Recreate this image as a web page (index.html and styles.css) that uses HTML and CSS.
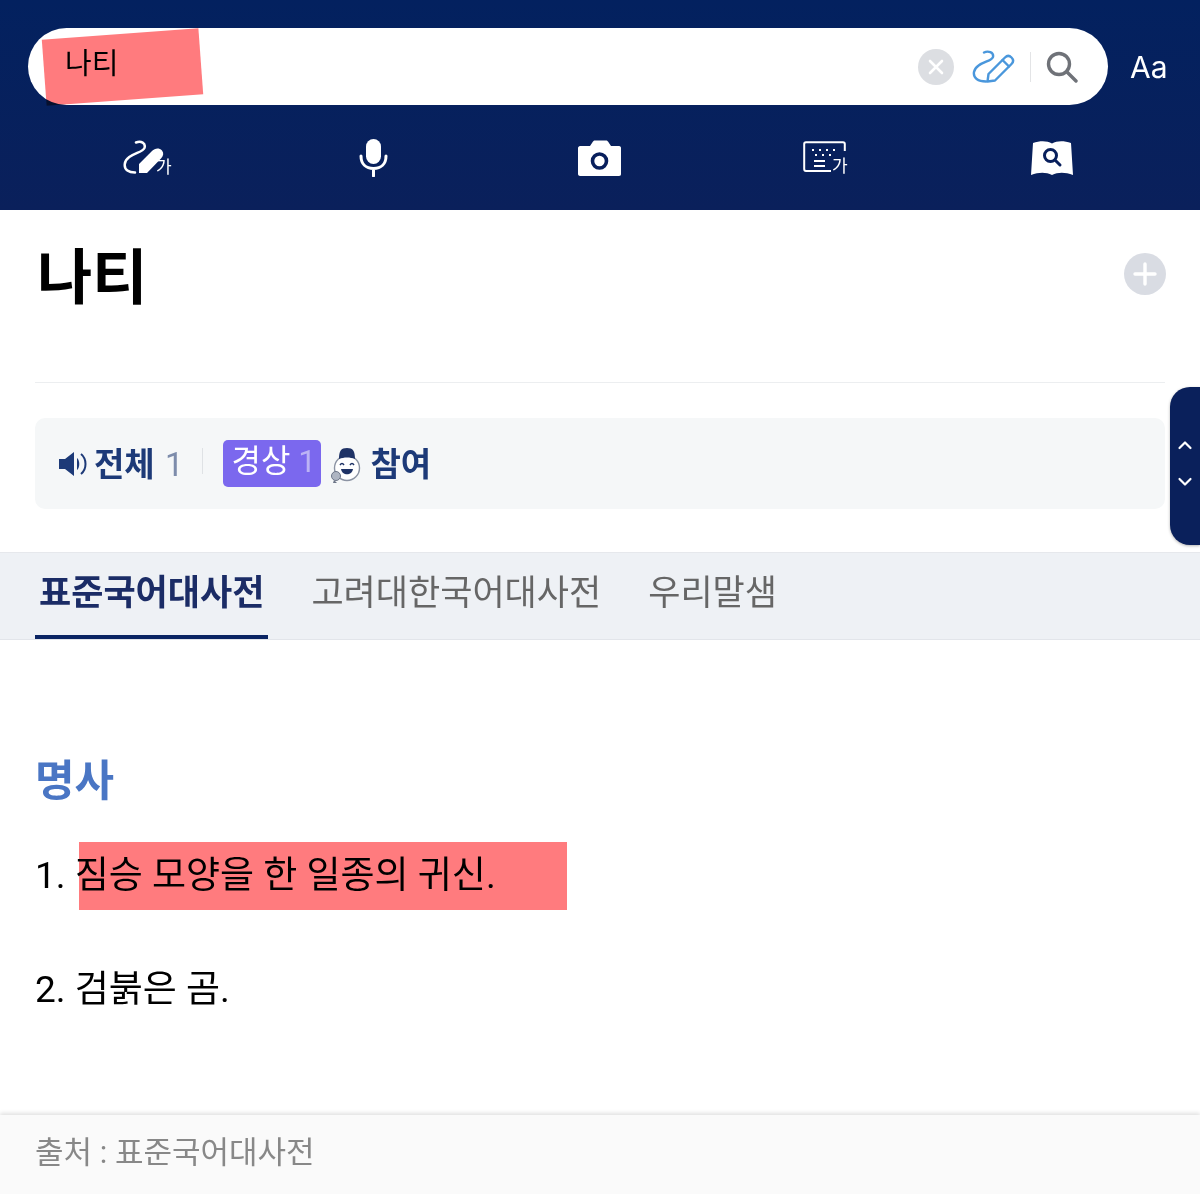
FILE: index.html
```html
<!DOCTYPE html>
<html lang="ko">
<head>
    <meta charset="UTF-8">
    <meta name="viewport" content="width=device-width, initial-scale=1.0">
    <title>나티</title>
    <link rel="stylesheet" href="styles.css">
</head>
<body>
    <header class="top">
        <div class="search_row">
            <div class="search_box">
                <span class="search_word">나티</span>
                <div class="search_tools">
                    <span class="clear_btn">
                        <svg width="20" height="20" viewBox="0 0 20 20"><path d="M4 4 16 16M16 4 4 16" stroke="#fff" stroke-width="2.6" stroke-linecap="round"/></svg>
                    </span>
                    <svg class="pen_btn" width="44" height="36" viewBox="0 0 44 36" fill="none" stroke="#4a97dc" stroke-width="2.4" stroke-linecap="round" stroke-linejoin="round">
                        <path d="M12 3.500C16 1.500 22 3 21 8C20 13 4 13 2 23C1 29 6 32.500 14 32.500"/>
                        <path d="M15.500 32.500 16.500 25 33 8.500C35 6.500 37.500 6.500 39.500 8.500C41.500 10.500 41.500 13 39.500 15L23 31.500Z"/>
                        <path d="M30.500 11 37 17.500"/>
                    </svg>
                    <span class="tool_line"></span>
                    <svg class="find_btn" width="32" height="32" viewBox="0 0 32 32" fill="none" stroke="#6f7278" stroke-width="3.400" stroke-linecap="round"><circle cx="13" cy="13" r="10.500"/><path d="M21 21 30 30"/></svg>
                </div>
            </div>
            <span class="font_btn">Aa</span>
        </div>
        <nav class="input_menu">
            <a href="#">
                <svg width="50" height="36" viewBox="0 0 50 36">
                    <path d="M13 2.500C18 .500 23 3 21.500 8C20 13 3 14 1.800 24C1 30 6 32.500 12 32.500" fill="none" stroke="#fff" stroke-width="2.500" stroke-linecap="round"/>
                    <path d="M16 33V24L29 11C32 8 36 7.500 39 10.500C41 13 40.500 16 38 18.500L24 33Z" fill="#fff"/>
                    <text class="mini_ga" x="33" y="33">가</text>
                </svg>
            </a>
            <a href="#">
                <svg width="30" height="38" viewBox="0 0 30 38" fill="none">
                    <rect x="7" y="0" width="15" height="25" rx="7.500" fill="#fff"/>
                    <path d="M2 17C2 25 7 29.500 14.500 29.500S27 25 27 17M14.500 29.500V37" stroke="#fff" stroke-width="3" stroke-linecap="round"/>
                </svg>
            </a>
            <a href="#">
                <svg width="44" height="36" viewBox="0 0 44 36">
                    <path d="M2 6H12L15 1.500C15.500 1 16 .500 17 .500H28C29 .500 29.500 1 30 1.500L33 6H41C42.500 6 43 7 43 8V34C43 35 42.500 36 41 36H2C1 36 0 35 0 34V8C0 7 1 6 2 6Z" fill="#fff"/>
                    <circle cx="21.500" cy="21" r="7" fill="none" stroke="#081f5c" stroke-width="3.600"/>
                </svg>
            </a>
            <a href="#">
                <svg width="46" height="34" viewBox="0 0 46 34">
                    <path d="M28 30H3C2 30 1.200 29 1.200 28V3C1.200 2 2 1.200 3 1.200H40C41 1.200 41.800 2 41.800 3V10" fill="none" stroke="#fff" stroke-width="2"/>
                    <path d="M9 9H11M16 9H18M23 9H25M30 9H32M12 14H14M19 14H21M26 14H28M11 20H22M11 25H22" stroke="#fff" stroke-width="2"/>
                    <text class="mini_ga" x="29" y="31">가</text>
                </svg>
            </a>
            <a href="#">
                <svg width="44" height="36" viewBox="0 0 44 36">
                    <path d="M3 3C10 .500 17 .500 22 3.500C27 .500 34 .500 41 3L43 35C35 32 28 32 22 35C16 32 9 32 1 35Z" fill="#fff"/>
                    <circle cx="20.500" cy="15.500" r="6" fill="none" stroke="#081f5c" stroke-width="3"/>
                    <path d="M25 20 30 25" stroke="#081f5c" stroke-width="3" stroke-linecap="round"/>
                </svg>
            </a>
        </nav>
        <span class="mark_word"></span>
    </header>

    <section class="entry">
        <div class="entry_title">
            <h1>나티</h1>
            <span class="add_btn">
                <svg width="24" height="24" viewBox="0 0 24 24"><path d="M12 2V22M2 12H22" stroke="#fff" stroke-width="3.400" stroke-linecap="round"/></svg>
            </span>
        </div>
        <div class="sound_box">
            <svg class="sound_icon" width="30" height="26" viewBox="0 0 30 26" fill="#1d3a78">
                <path d="M0 8H6L15 1V25L6 18H0Z"/>
                <path d="M18 7C21 9 21 17 18 19Z"/>
                <path d="M22 3C28 8 28 18 22 23" fill="none" stroke="#1d3a78" stroke-width="2"/>
            </svg>
            <span class="sound_name">전체 <em>1</em></span>
            <span class="sound_line"></span>
            <span class="sound_tag">경상 <em>1</em></span>
            <svg class="face_icon" width="30" height="36" viewBox="0 0 30 36">
                <circle cx="16" cy="21" r="12.500" fill="#fff" stroke="#8b93a3" stroke-width="1.400"/>
                <path d="M8 12C8 4 10 1 16 1S24 4 24 12C19 10 13 10 8 12Z" fill="#1f3366"/>
                <path d="M9 18Q11 15 13 18M19 18Q21 15 23 18" fill="none" stroke="#1f3366" stroke-width="1.500"/>
                <path d="M10 22H22C21 29 11 29 10 22Z" fill="#1f3366"/>
                <circle cx="5" cy="29" r="4.500" fill="#aeb5c2" stroke="#6d7688"/>
                <path d="M3 33 2 36H6Z" fill="#6d7688"/>
            </svg>
            <span class="sound_name">참여</span>
        </div>
    </section>

    <div class="dict_tabs">
        <a href="#" class="on">표준국어대사전</a>
        <a href="#">고려대한국어대사전</a>
        <a href="#">우리말샘</a>
    </div>

    <main class="mean">
        <h2>명사</h2>
        <ol class="mean_list">
            <li class="marked">1. 짐승 모양을 한 일종의 귀신.<span class="mark_line"></span></li>
            <li>2. 검붉은 곰.</li>
        </ol>
    </main>

    <footer class="source">출처 : 표준국어대사전</footer>

    <div class="side_btn">
        <svg width="16" height="60" viewBox="0 0 16 60" fill="none" stroke="#fff" stroke-width="2.200" stroke-linecap="round" stroke-linejoin="round">
            <path d="M2.500 12 8 6.500 13.500 12"/>
            <path d="M2.500 43 8 48.500 13.500 43"/>
        </svg>
    </div>
</body>
</html>
```

FILE: styles.css
```css
* {margin:0; padding:0; box-sizing:border-box;}
html, body {height:1194px; overflow:hidden;}
body {
    position:relative;
    font-family:Roboto, "Noto Sans CJK KR", sans-serif;
    color:#000; background:#fff;
}
a {text-decoration:none; color:inherit;}
em {font-style:normal;}

/* 상단 검색 */
.top {
    position:relative;
    height:210px; padding:28px 0 0 28px;
    background:linear-gradient(#03215f, #0a205b);
}
.search_row {display:flex; align-items:center;}
.search_box {
    width:1080px; height:77px;
    padding:0 30px 0 37px;
    display:flex; align-items:center; justify-content:space-between;
    background:#fff; border-radius:39px;
}
.search_word {font-size:29px; line-height:1; position:relative; top:-2px;}
.search_tools {display:flex; align-items:center;}
.clear_btn {
    width:36px; height:36px; margin-right:18px;
    display:flex; align-items:center; justify-content:center;
    background:#dcdee2; border-radius:50%;
}
.pen_btn {margin-right:14px;}
.tool_line {width:1px; height:30px; background:#e3e4e6; margin-right:15px;}
.find_btn {display:block;}
.font_btn {
    margin-left:22px;
    font-family:Inter, sans-serif;
    font-size:30px; color:#fff;
}
.input_menu {
    display:grid; grid-template-columns:repeat(5, 226px);
    margin:0 0 0 7px; padding-top:34px;
}
.input_menu a {
    height:38px;
    display:flex; align-items:center; justify-content:center;
}
.mini_ga {font-family:"Noto Sans CJK KR", sans-serif; font-size:17px; fill:#fff;}
.mark_word {
    position:absolute; left:44px; top:34px;
    width:157px; height:66px;
    background:#ff7b7e;
    mix-blend-mode:multiply;
    transform:rotate(-4.2deg);
}

/* 표제어 */
.entry {padding:0 35px;}
.entry_title {
    height:173px;
    display:flex; justify-content:space-between; align-items:flex-start;
    border-bottom:1px solid #eceef0;
}
.entry_title h1 {
    font-size:60px; font-weight:700; line-height:1;
    margin:39px 0 0 2px;
}
.add_btn {
    width:42px; height:42px; margin-top:43px; margin-right:-1px;
    display:flex; align-items:center; justify-content:center;
    background:#d9dce3; border-radius:50%;
}
.sound_box {
    height:91px; margin-top:35px; padding:0 24px;
    display:flex; align-items:center;
    background:#f5f7f8; border-radius:10px;
}
.sound_icon {margin-right:5px;}
.sound_name {font-size:33px; font-weight:700; color:#1d3a78; position:relative; top:-2px;}
.sound_name em {font-weight:400; color:#7d8cab; margin-left:2px;}
.sound_line {width:1px; height:26px; background:#dfe2e5; margin:-6px 20px 0 19px;}
.sound_tag {
    width:98px; height:47px; padding-left:8px;
    font-size:32px; line-height:42px; color:#fff;
    background:#7b68ee; border-radius:5px;
    white-space:nowrap;
}
.sound_tag em {color:#bcb3f5;}
.face_icon {margin:2px 9px 0 10px;}

/* 사전 탭 */
.dict_tabs {
    height:88px; margin-top:43px; padding:0 35px;
    display:flex; gap:39px;
    background:#eef1f5;
    border-top:1px solid #e6e8ec; border-bottom:1px solid #e2e5ea;
}
.dict_tabs a {
    padding:0 4px; height:86px;
    font-size:35px; line-height:82px; color:#666;
}
.dict_tabs .on {
    font-weight:700; color:#1b2c66;
    border-bottom:4px solid #0a2463;
}

/* 뜻풀이 */
.mean {height:475px; padding:110px 35px 0;}
.mean h2 {font-size:43px; font-weight:700; color:#4a76c4; line-height:62px;}
.mean_list {list-style:none; margin-top:34px;}
.mean_list li {font-size:37px; line-height:60px; margin-bottom:54px;}
.marked {position:relative;}
.mark_line {
    position:absolute; left:44px; top:-4px;
    width:488px; height:68px;
    background:#ff7b7e;
    mix-blend-mode:multiply;
}

/* 출처 */
.source {
    height:80px; padding:12px 35px 0;
    font-size:31px; color:#888;
    background:#fafafa;
    box-shadow:0 -2px 4px rgba(0,0,0,.12);
}

.side_btn {
    position:absolute; right:0; top:387px;
    width:30px; height:158px;
    display:flex; align-items:center; justify-content:center;
    background:#0a205b; border-radius:20px 0 0 20px;
    box-shadow:0 1px 3px rgba(0,0,0,.3);
}
```
